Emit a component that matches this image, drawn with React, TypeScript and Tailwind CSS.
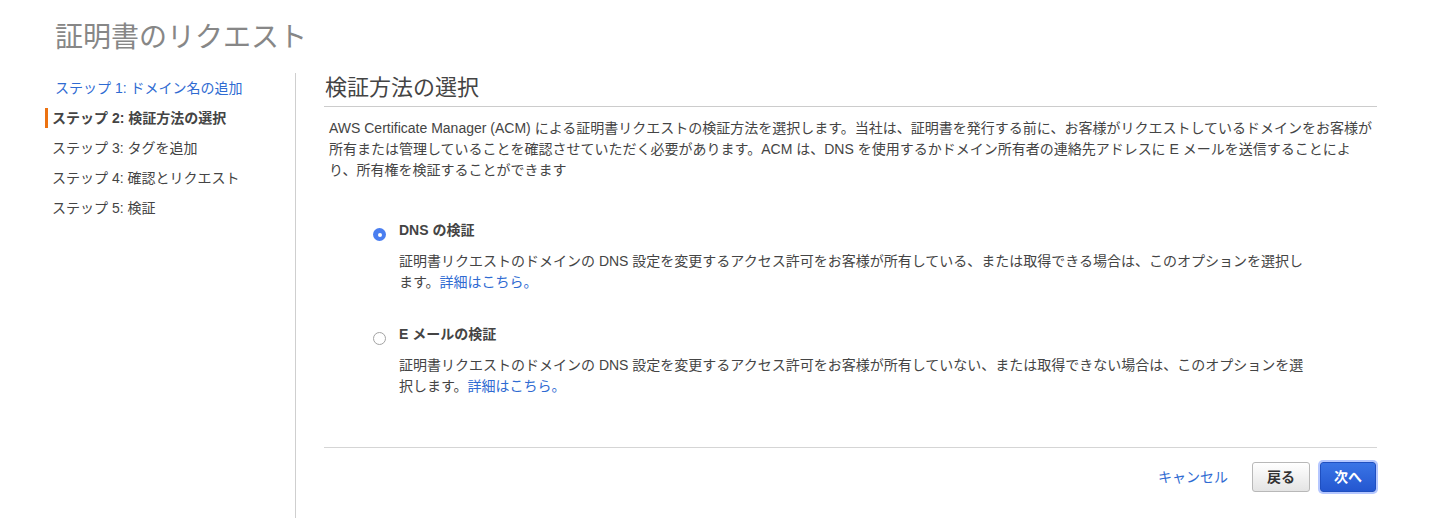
import React from "react";

const FONT = {
  fontFamily: '"Liberation Sans", "Noto Sans CJK JP", sans-serif',
};

function Step({
  label,
  state,
}: {
  label: string;
  state: "done" | "active" | "todo";
}) {
  if (state === "active") {
    return (
      <div className="flex h-[30px] items-center pl-[45px]">
        <div className="h-[20px] w-[3px] bg-[#ec7211]" />
        <span className="ml-[4px] text-[14px] font-bold text-[#444]">{label}</span>
      </div>
    );
  }
  if (state === "done") {
    return (
      <div className="flex h-[30px] items-center pl-[55px]">
        <a className="text-[14px] text-[#2f6bd2]">{label}</a>
      </div>
    );
  }
  return (
    <div className="flex h-[30px] items-center pl-[52px]">
      <span className="text-[14px] text-[#444]">{label}</span>
    </div>
  );
}

function Radio({ checked }: { checked: boolean }) {
  if (checked) {
    return (
      <div className="mt-[8px] flex h-[13px] w-[13px] shrink-0 items-center justify-center rounded-full bg-[#4a7ef0]">
        <div className="h-[4px] w-[4px] rounded-full bg-white" />
      </div>
    );
  }
  return (
    <div className="mt-[8px] h-[13px] w-[13px] shrink-0 rounded-full border border-[#a3a3a3] bg-white" />
  );
}

export default function App() {
  return (
    <div className="min-h-[518px] w-[1434px] bg-white text-[#444]" style={FONT}>
      <div className="pl-[55px] pt-[20px]">
        <h1 className="text-[28px] font-normal leading-[36px] text-[#878787]">
          証明書のリクエスト
        </h1>
      </div>
      <div className="mt-[17px] flex min-h-[445px]">
        <div className="w-[296px] shrink-0 border-r border-[#cfcfcf]">
          <Step label="ステップ 1: ドメイン名の追加" state="done" />
          <Step label="ステップ 2: 検証方法の選択" state="active" />
          <Step label="ステップ 3: タグを追加" state="todo" />
          <Step label="ステップ 4: 確認とリクエスト" state="todo" />
          <Step label="ステップ 5: 検証" state="todo" />
        </div>
        <div className="flex-1 pl-[28px] pr-[57px]">
          <h2 className="border-b border-[#cccccc] pb-[3px] pl-[1px] text-[22px] font-normal leading-[30px] text-[#444]">
            検証方法の選択
          </h2>
          <p className="mt-[11px] pl-[5px] text-[14px] leading-[21px] text-[#444]">
            AWS Certificate Manager (ACM) による証明書リクエストの検証方法を選択します。当社は、証明書を発行する前に、お客様がリクエストしているドメインをお客様が
            <br />
            所有または管理していることを確認させていただく必要があります。ACM は、DNS を使用するかドメイン所有者の連絡先アドレスに E メールを送信することによ
            <br />
            り、所有権を検証することができます
          </p>

          <div className="mt-[39px] flex pl-[49px]">
            <Radio checked />
            <div className="ml-[13px]">
              <div className="text-[14px] font-bold leading-[21px] text-[#444]">DNS の検証</div>
              <div className="mt-[10px] text-[14px] leading-[21px] text-[#444]">
                証明書リクエストのドメインの DNS 設定を変更するアクセス許可をお客様が所有している、または取得できる場合は、このオプションを選択し
                <br />
                ます。<a className="text-[#2f6bd2]">詳細はこちら。</a>
              </div>
            </div>
          </div>

          <div className="mt-[31px] flex pl-[49px]">
            <Radio checked={false} />
            <div className="ml-[13px]">
              <div className="text-[14px] font-bold leading-[21px] text-[#444]">E メールの検証</div>
              <div className="mt-[10px] text-[14px] leading-[21px] text-[#444]">
                証明書リクエストのドメインの DNS 設定を変更するアクセス許可をお客様が所有していない、または取得できない場合は、このオプションを選
                <br />
                択します。<a className="text-[#2f6bd2]">詳細はこちら。</a>
              </div>
            </div>
          </div>

          <div className="mt-[50px] border-t border-[#d5d5d5]" />

          <div className="mt-[14px] flex items-center justify-end">
            <a className="text-[14px] text-[#2f6bd2]">キャンセル</a>
            <button className="ml-[24px] h-[30px] w-[58px] rounded-[3px] border border-[#b8b8b8] bg-gradient-to-b from-[#ffffff] to-[#e4e4e4] text-[14px] font-bold text-[#333]">
              戻る
            </button>
            <button className="ml-[10px] mr-[1px] h-[30px] w-[56px] rounded-[3px] border border-[#1f4fc0] bg-gradient-to-b from-[#3a74e6] to-[#2457d0] text-[14px] font-bold text-white shadow-[0_0_0_2px_rgba(90,130,255,0.45)]">
              次へ
            </button>
          </div>
        </div>
      </div>
    </div>
  );
}
